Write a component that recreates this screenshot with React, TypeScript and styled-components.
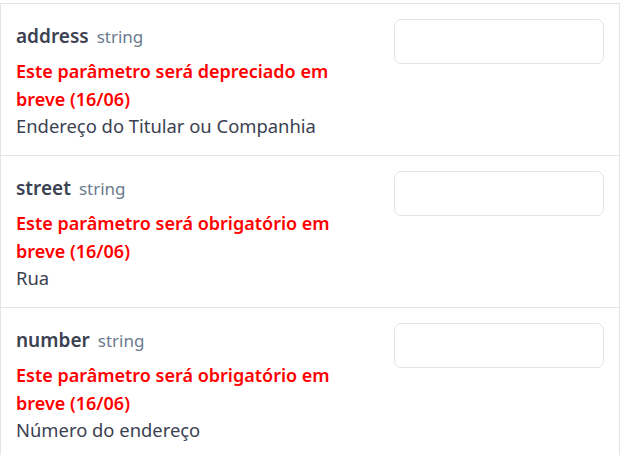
import React from "react";
import styled, { createGlobalStyle } from "styled-components";

const Global = createGlobalStyle`
  html, body { margin: 0; padding: 0; background: #ffffff; }
  body { font-family: "Noto Sans", "Segoe UI", sans-serif; }
`;

const List = styled.div`
  margin-top: 3px;
  width: 620px;
  box-sizing: border-box;
  border: 1px solid #e5e5e5;
  border-bottom: none;
`;

const Row = styled.div`
  display: grid;
  grid-template-columns: 1fr 210px;
  column-gap: 40px;
  height: 152px;
  box-sizing: border-box;
  padding: 15px 15px 0 15px;
  border-bottom: 1px solid #e5e5e5;
`;

const Info = styled.div`
  display: flex;
  flex-direction: column;
  padding-top: 4px;
`;

const Title = styled.div`
  display: flex;
  align-items: baseline;
  gap: 8px;
  line-height: 27px;
  margin-bottom: 7px;
`;

const Name = styled.span`
  font-size: 19px;
  font-weight: 600;
  color: #3b4151;
`;

const Type = styled.span`
  font-size: 17px;
  color: #6b7b8e;
`;

const Warning = styled.div`
  font-size: 18px;
  font-weight: 600;
  line-height: 28px;
  color: #ff0000;
`;

const Description = styled.div`
  font-size: 18.4px;
  line-height: 26px;
  color: #3b4151;
`;

const Input = styled.input`
  box-sizing: border-box;
  width: 210px;
  height: 45px;
  border: 1px solid #e3e3e3;
  border-radius: 7px;
  background: #fff;
  outline: none;
`;

const params = [
  { name: "address", warning: "Este parâmetro será depreciado em breve (16/06)", desc: "Endereço do Titular ou Companhia" },
  { name: "street", warning: "Este parâmetro será obrigatório em breve (16/06)", desc: "Rua" },
  { name: "number", warning: "Este parâmetro será obrigatório em breve (16/06)", desc: "Número do endereço" },
];

export default function App() {
  return (
    <>
      <Global />
      <List>
        {params.map((p) => (
          <Row key={p.name}>
            <Info>
              <Title>
                <Name>{p.name}</Name>
                <Type>string</Type>
              </Title>
              <Warning>{p.warning}</Warning>
              <Description>{p.desc}</Description>
            </Info>
            <Input />
          </Row>
        ))}
      </List>
    </>
  );
}
